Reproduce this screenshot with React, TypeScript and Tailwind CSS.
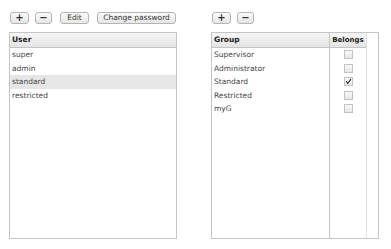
import React from "react";

const users = ["super", "admin", "standard", "restricted"];
const groups = [
  { name: "Supervisor", on: false },
  { name: "Administrator", on: false },
  { name: "Standard", on: true },
  { name: "Restricted", on: false },
  { name: "myG", on: false },
];

function Btn({ children, w }: { children: React.ReactNode; w: string }) {
  return (
    <button
      type="button"
      className={`${w} flex h-[12px] items-center justify-center rounded-[3px] border border-[#b4b4b4] bg-gradient-to-b from-[#fbfbfb] to-[#e6e6e6] text-[7.5px] leading-none text-[#333]`}
    >
      {children}
    </button>
  );
}

function Box({ on }: { on: boolean }) {
  return (
    <span className="flex h-[9px] w-[9px] items-center justify-center border border-[#c2c2c2] bg-gradient-to-b from-[#fafafa] to-[#e6e6e6]">
      {on ? (
        <svg viewBox="0 0 9 9" className="h-[9px] w-[9px]">
          <path d="M1.5 4.3 L3.6 7 L7.6 1.4" fill="none" stroke="#222" strokeWidth="1.4" />
        </svg>
      ) : null}
    </span>
  );
}

export default function App() {
  return (
    <div
      className="flex h-[249px] w-[391px] gap-[34px] bg-white pl-[9px] pt-[12px] text-[#444]"
      style={{ fontFamily: '"DejaVu Sans", Verdana, sans-serif' }}
    >
      <div className="flex w-[168px] flex-col">
        <div className="flex h-[12px] items-center">
          <Btn w="w-[19px] text-[10px] font-bold ml-[1px]">+</Btn>
          <Btn w="w-[17px] text-[10px] font-bold ml-[6px]">−</Btn>
          <Btn w="w-[29px] ml-[8px]">Edit</Btn>
          <Btn w="w-[79px] ml-[8px]">Change password</Btn>
        </div>
        <div className="mt-[8px] flex h-[207px] flex-col border border-[#c4c4c4]">
          <div className="flex h-[15px] items-center border-b border-[#c4c4c4] bg-gradient-to-b from-[#f6f6f6] to-[#e4e4e4] px-[2px] text-[7.5px] font-bold text-[#222]">
            User
          </div>
          <div>
            {users.map((u) => (
              <div
                key={u}
                className={`flex h-[13.5px] items-center px-[2px] text-[7.5px] ${u === "standard" ? "bg-[#e6e6e6]" : ""}`}
              >
                {u}
              </div>
            ))}
          </div>
        </div>
      </div>

      <div className="flex w-[168px] flex-col">
        <div className="flex h-[12px] items-center">
          <Btn w="w-[19px] text-[10px] font-bold ml-[1px]">+</Btn>
          <Btn w="w-[17px] text-[10px] font-bold ml-[6px]">−</Btn>
        </div>
        <div className="mt-[8px] flex h-[207px] border border-[#c4c4c4]">
          <div className="flex w-[118px] flex-col border-r border-[#c4c4c4]">
            <div className="flex h-[15px] items-center border-b border-[#c4c4c4] bg-gradient-to-b from-[#f6f6f6] to-[#e4e4e4] px-[2px] text-[7.5px] font-bold text-[#222]">
              Group
            </div>
            {groups.map((g) => (
              <div key={g.name} className="flex h-[13.5px] items-center px-[2px] text-[7.5px]">
                {g.name}
              </div>
            ))}
          </div>
          <div className="flex w-[37px] flex-col border-r border-[#e2e2e2]">
            <div className="flex h-[15px] items-center justify-center border-b border-[#c4c4c4] bg-gradient-to-b from-[#f6f6f6] to-[#e4e4e4] text-[7px] font-bold text-[#222]">
              Belongs
            </div>
            {groups.map((g) => (
              <div key={g.name} className="flex h-[13.5px] items-center justify-center">
                <Box on={g.on} />
              </div>
            ))}
          </div>
          <div className="flex-1" />
        </div>
      </div>
    </div>
  );
}
